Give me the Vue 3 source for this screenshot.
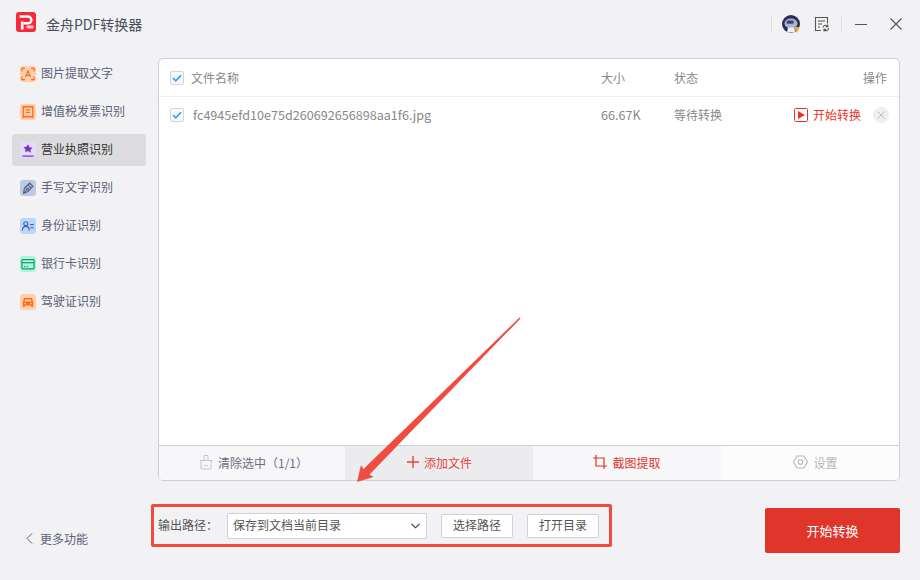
<script setup>
import { ref } from 'vue'

const menuList = [
  { name: '图片提取文字', bg: '#ffcfae', color: '#ff6a1a', icon: 'text' },
  { name: '增值税发票识别', bg: '#ffcfae', color: '#ff6a1a', icon: 'bill' },
  { name: '营业执照识别', bg: '#e4dbf8', color: '#7a35c0', icon: 'star' },
  { name: '手写文字识别', bg: '#bccbe2', color: '#4f5f88', icon: 'pen' },
  { name: '身份证识别', bg: '#bcd5fb', color: '#45609f', icon: 'id' },
  { name: '银行卡识别', bg: '#aff3dc', color: '#0aa36e', icon: 'card' },
  { name: '驾驶证识别', bg: '#ffcfae', color: '#ff6a1a', icon: 'car' }
]
const activeMenu = ref('营业执照识别')
</script>

<template>
  <div class="page">
    <header class="top_bar">
      <div class="brand">
        <svg class="logo" width="20" height="20" viewBox="0 0 20 20">
          <rect width="20" height="20" rx="3" fill="#f62b3a" />
          <path d="M3.500 4.500h8.500a3.400 3.400 0 0 1 0 6.800H7.500" fill="none" stroke="#fff" stroke-width="2.400" />
          <path d="M6.200 9.500v8" stroke="#fff" stroke-width="2.600" />
          <rect x="10.500" y="13.500" width="7" height="3" rx="1" fill="#ffc9cd" />
        </svg>
        <span class="brand_name">金舟PDF转换器</span>
      </div>
      <div class="win_tools">
        <i class="tool_line"></i>
        <svg class="avatar" width="20" height="20" viewBox="0 0 20 20">
          <circle cx="10" cy="10" r="9" fill="#2b2d5c" />
          <ellipse cx="10" cy="9.500" rx="6.500" ry="5" fill="#a9b3d6" />
          <rect x="5.500" y="6.500" width="7.500" height="3.200" rx="1.600" fill="#3d4478" />
          <path d="M6 18.500l1-5h6.500l.5 5z" fill="#eef0f8" />
          <path d="M13 13h5.500l-3 6z" fill="#f5a623" />
        </svg>
        <svg class="note" width="16" height="16" viewBox="0 0 16 16" fill="none" stroke="#555" stroke-width="1.100">
          <path d="M7 14.500H1.500V1.500h12v6" />
          <path d="M4 5h7M4 8h4M4 11h2" />
          <path d="M9 11.500a2.600 2.600 0 0 1 4.800-1M14.600 12a2.600 2.600 0 0 1-4.600 1.600" />
          <path d="M13.800 8.600v2h-2M10 15.400v-2h2" />
        </svg>
        <i class="tool_line second"></i>
        <span class="win_min"></span>
        <svg class="win_close" width="12" height="12" viewBox="0 0 12 12" stroke="#555" stroke-width="1.100">
          <path d="M.5.500l11 11M11.500.500l-11 11" />
        </svg>
      </div>
    </header>

    <div class="main">
      <aside class="side">
        <ul class="menu">
          <li
            v-for="item in menuList"
            :key="item.name"
            class="menu_item"
            :class="{ is_active: item.name === activeMenu }"
          >
            <span class="menu_icon" :style="{ background: item.bg }">
              <svg width="14" height="14" viewBox="0 0 16 16" fill="none" :stroke="item.color" stroke-width="1.300">
                <template v-if="item.icon === 'text'">
                  <path d="M1 5V1.500h3.500M11.500 1.500H15V5M1 11v3.500h3.500M11.500 14.500H15V11" />
                  <path d="M5 11.500L8 4.500l3 7M6 9.500h4" />
                </template>
                <template v-else-if="item.icon === 'bill'">
                  <path d="M2.500 2h11v12l-2-1-1.700 1L8 13l-1.800 1-1.700-1-2 1z" stroke-width="1.500" />
                  <path d="M5.500 5.500h5M5.500 8.500h5" />
                </template>
                <template v-else-if="item.icon === 'star'">
                  <path d="M8 1.500l1.800 3.300 3.400.6-2.400 2.500.5 3.300L8 9.200l-3.300 1.500.5-3.300-2.400-2.500 3.400-.6z" :fill="item.color" stroke="none" />
                  <path d="M1.500 15h13" stroke-width="1.400" />
                </template>
                <template v-else-if="item.icon === 'pen'">
                  <path d="M4 8l6-5.500 3.500 3.500L8 12l-5 2z" stroke-width="1.400" />
                  <path d="M3 14l3.500-4M8 4.500l3.500 3.500" />
                  <circle cx="7.300" cy="9" r="1" />
                </template>
                <template v-else-if="item.icon === 'id'">
                  <circle cx="5.500" cy="5.500" r="2.300" />
                  <path d="M1.500 13c.3-3 2-4.500 4-4.500s3.700 1.500 4 4.500" />
                  <path d="M10.500 6.500h4M10.500 10h4" />
                </template>
                <template v-else-if="item.icon === 'card'">
                  <rect x="1" y="3" width="14" height="10.500" rx="1" stroke-width="1.400" />
                  <path d="M1 6.500h14" stroke-width="1.400" />
                  <path d="M3.500 11h1.500M6.500 11h1.500" />
                </template>
                <template v-else>
                  <path d="M2 8l1.500-4.500h9L14 8v5.500h-2.500V12h-7v1.500H2z" :fill="item.color" stroke="none" />
                  <path d="M3.800 7.500l.8-2.500h6.800l.8 2.500z" :fill="item.bg" stroke="none" />
                  <circle cx="4.800" cy="9.800" r="1" :fill="item.bg" stroke="none" />
                  <circle cx="11.200" cy="9.800" r="1" :fill="item.bg" stroke="none" />
                </template>
              </svg>
            </span>
            <span class="menu_text">{{ item.name }}</span>
          </li>
        </ul>
      </aside>

      <section class="panel">
        <div class="row head_row">
          <span class="check">
            <svg width="10" height="8" viewBox="0 0 10 8" fill="none" stroke="#2a9bfb" stroke-width="1.600"><path d="M1 4l2.800 2.800L9 1.200" /></svg>
          </span>
          <span class="col_name">文件名称</span>
          <span class="col_size">大小</span>
          <span class="col_state">状态</span>
          <span class="col_op">操作</span>
        </div>
        <div class="row file_row">
          <span class="check">
            <svg width="10" height="8" viewBox="0 0 10 8" fill="none" stroke="#2a9bfb" stroke-width="1.600"><path d="M1 4l2.800 2.800L9 1.200" /></svg>
          </span>
          <span class="col_name file_name">fc4945efd10e75d260692656898aa1f6.jpg</span>
          <span class="col_size file_size">66.67K</span>
          <span class="col_state">等待转换</span>
          <span class="col_op">
            <span class="start_link">
              <svg width="14" height="14" viewBox="0 0 14 14"><rect x=".5" y=".5" width="13" height="13" rx="1" fill="none" stroke="#e0352b" /><path d="M4 3l7 4-7 4z" fill="#e0352b" /></svg>
              开始转换
            </span>
            <span class="remove">
              <svg width="8" height="8" viewBox="0 0 8 8" stroke="#bcbfc8"><path d="M.5.500l7 7M7.500.500l-7 7" /></svg>
            </span>
          </span>
        </div>

        <div class="tools">
          <div class="tool_btn is_clear">
            <svg width="14" height="16" viewBox="0 0 14 16" fill="none" stroke="#c4c6cc"><path d="M.5 6.500h13M2 6.500V15h10V6.500M5 6.500v-5h4v5M5 11.500h4" /></svg>
            清除选中（1/1）
          </div>
          <div class="tool_btn is_add">
            <svg width="12" height="12" viewBox="0 0 12 12" stroke="#e9433a" stroke-width="1.400"><path d="M6 0v12M0 6h12" /></svg>
            添加文件
          </div>
          <div class="tool_btn is_crop">
            <svg width="14" height="14" viewBox="0 0 14 14" fill="none" stroke="#e0352b" stroke-width="1.200"><path d="M3 0v11h11M0 3h11v11" /></svg>
            截图提取
          </div>
          <div class="tool_btn is_set">
            <svg width="15" height="14" viewBox="0 0 15 14" fill="none" stroke="#b5b7bd" stroke-width="1.100"><path d="M4 1h7l3.500 6L11 13H4L.5 7z" /><circle cx="7.500" cy="7" r="2.300" /></svg>
            设置
          </div>
        </div>
      </section>
    </div>

    <footer class="bottom">
      <div class="more">
        <svg width="7" height="11" viewBox="0 0 7 11" fill="none" stroke="#5d6175"><path d="M6 .5l-5 5 5 5" /></svg>
        更多功能
      </div>
      <div class="path_box">
        <span class="path_label">输出路径：</span>
        <div class="path_select">
          <span class="select_text">保存到文档当前目录</span>
          <svg width="9" height="6" viewBox="0 0 9 6" fill="none" stroke="#333" stroke-width="1.100"><path d="M.5.800l4 4 4-4" /></svg>
        </div>
        <button class="path_btn">选择路径</button>
        <button class="path_btn">打开目录</button>
      </div>
      <button class="start_btn">开始转换</button>
    </footer>

    <svg class="arrow" width="920" height="580" viewBox="0 0 920 580">
      <path d="M520.500 318.500L369.500 474.500l4 2.500L357 482l4-17 2.500 4L519.500 317.500z" fill="#f04c40" />
    </svg>
  </div>
</template>

<style>
html, body { margin: 0; background: #f2f2f5; }
</style>

<style scoped>
.page {
  position: relative;
  width: 920px;
  height: 580px;
  overflow: hidden;
  background: #f2f2f5;
  color: #5d6175;
  font-family: "Noto Sans CJK SC", "Noto Sans", sans-serif;
  font-size: 12px;
}
.top_bar {
  display: flex;
  justify-content: space-between;
  align-items: center;
  height: 47px;
  padding: 0 18px 0 16px;
  box-sizing: border-box;
}
.brand { display: flex; align-items: center; gap: 10px; }
.logo { margin-top: -4px; }
.brand_name { font-size: 14px; color: #4a4d5c; }
.win_tools { display: flex; align-items: center; margin-top: 1px; }
.tool_line { width: 1px; height: 14px; background: #dcdce2; margin-right: 9px; }
.tool_line.second { margin: 0 13px 0 11px; }
.note { margin-left: 13px; }
.win_min { width: 12px; height: 1px; background: #555; margin-right: 23px; }

.main { display: flex; height: 433px; }
.side { width: 158px; flex-shrink: 0; padding: 11px 12px 0; box-sizing: border-box; }
.menu { list-style: none; margin: 0; padding: 0; display: flex; flex-direction: column; gap: 6px; }
.menu_item {
  display: flex;
  align-items: center;
  gap: 5px;
  width: 134px;
  height: 32px;
  padding-left: 8px;
  box-sizing: border-box;
  border-radius: 3px;
}
.menu_text { padding-bottom: 4px; }
.menu_item.is_active { background: #dcdcdf; color: #333; }
.menu_icon {
  display: flex;
  align-items: center;
  justify-content: center;
  width: 16px;
  height: 16px;
  border-radius: 3px;
}

.panel {
  display: flex;
  flex-direction: column;
  width: 742px;
  height: 423px;
  margin-top: 11px;
  box-sizing: border-box;
  border: 1px solid #cfd0de;
  border-radius: 5px;
  background: #fff;
  overflow: hidden;
  color: #888;
}
.row { display: flex; align-items: center; padding-left: 11px; }
.head_row { height: 37px; border-bottom: 1px solid #eeeef1; }
.file_row { height: 35px; }
.check {
  display: flex;
  align-items: center;
  justify-content: center;
  width: 12px;
  height: 12px;
  border: 1px solid #d3d3d8;
  border-radius: 2px;
  background: #f7f9fc;
  flex-shrink: 0;
}
.col_name { width: 410px; margin-left: 7px; }
.file_name { margin-left: 9px; width: 408px; font-size: 12.6px; }
.col_size { width: 73px; }
.file_size { font-size: 12.6px; }
.col_state { width: 90px; }
.col_op { flex: 1; display: flex; justify-content: flex-end; align-items: center; padding-right: 12px; }
.start_link { display: flex; align-items: center; gap: 5px; color: #e9332b; }
.remove {
  display: flex;
  align-items: center;
  justify-content: center;
  width: 16px;
  height: 16px;
  margin-left: 12px;
  margin-right: -2px;
  border-radius: 50%;
  background: #eeeef3;
}

.tools {
  display: grid;
  grid-template-columns: 186px 188px 188px 1fr;
  height: 35px;
  box-sizing: border-box;
  margin-top: auto;
  border-top: 1px solid #cfd0de;
}
.tool_btn {
  display: flex;
  align-items: center;
  justify-content: center;
  gap: 5px;
  padding-bottom: 2px;
  box-sizing: border-box;
}
.is_clear { background: #f7f7f9; color: #6b6e7d; padding-left: 3px; }
.is_add { background: #ececef; color: #e9433a; padding-left: 1px; }
.is_crop { background: #f7f7f9; color: #e0352b; }
.is_set { background: #fcfcfd; color: #b5b7bd; padding-left: 11px; }

.bottom { display: flex; align-items: flex-start; height: 100px; }
.more {
  display: flex;
  align-items: center;
  gap: 7px;
  width: 125px;
  height: 18px;
  margin: 49px 0 0 26px;
  flex-shrink: 0;
}
.path_box {
  display: flex;
  align-items: center;
  width: 461px;
  height: 43px;
  margin-top: 24px;
  padding-left: 4px;
  box-sizing: border-box;
  border: 3px solid #ef4b3f;
  border-radius: 2px;
  color: #555;
}
.path_label { width: 69px; flex-shrink: 0; padding-bottom: 2px; }
.path_select {
  display: flex;
  align-items: center;
  justify-content: space-between;
  width: 200px;
  height: 26px;
  padding: 0 6px 0 5px;
  box-sizing: border-box;
  border: 1px solid #cfd0de;
  border-radius: 2px;
  background: #fff;
}
.select_text { padding-bottom: 2px; }
.path_btn {
  width: 72px;
  height: 24px;
  padding: 0 0 2px;
  margin-left: 14px;
  box-sizing: border-box;
  border: 1px solid #cfd0de;
  border-radius: 2px;
  background: #fff;
  color: #555;
  font: inherit;
}
.start_btn {
  width: 135px;
  height: 45px;
  margin-top: 28px;
  margin-left: 153px;
  border: none;
  border-radius: 2px;
  background: #e0352b;
  color: #fff;
  font: inherit;
  font-size: 13px;
}
.arrow { position: absolute; left: 0; top: 0; pointer-events: none; }
</style>
